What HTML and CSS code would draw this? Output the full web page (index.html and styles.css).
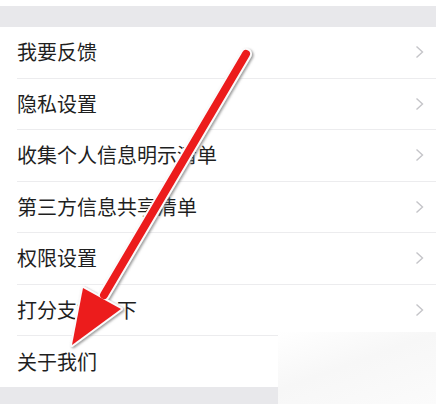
FILE: index.html
```html
<!DOCTYPE html>
<html lang="zh">
<head>
<meta charset="utf-8">
<link rel="stylesheet" href="styles.css">
</head>
<body>
<div class="page">
  <div class="top-strip"></div>
  <div class="gap-band"></div>
  <ul class="menu">
    <li class="row"><span class="label">我要反馈</span><svg class="chev" viewBox="0 0 9 14"><path d="M1.5 1.5 7.5 7 1.5 12.5"/></svg></li>
    <li class="row"><span class="label">隐私设置</span><svg class="chev" viewBox="0 0 9 14"><path d="M1.5 1.5 7.5 7 1.5 12.5"/></svg></li>
    <li class="row"><span class="label">收集个人信息明示清单</span><svg class="chev" viewBox="0 0 9 14"><path d="M1.5 1.5 7.5 7 1.5 12.5"/></svg></li>
    <li class="row"><span class="label">第三方信息共享清单</span><svg class="chev" viewBox="0 0 9 14"><path d="M1.5 1.5 7.5 7 1.5 12.5"/></svg></li>
    <li class="row"><span class="label">权限设置</span><svg class="chev" viewBox="0 0 9 14"><path d="M1.5 1.5 7.5 7 1.5 12.5"/></svg></li>
    <li class="row"><span class="label">打分支持一下</span><svg class="chev" viewBox="0 0 9 14"><path d="M1.5 1.5 7.5 7 1.5 12.5"/></svg></li>
    <li class="row last"><span class="label">关于我们</span><svg class="chev" viewBox="0 0 9 14"><path d="M1.5 1.5 7.5 7 1.5 12.5"/></svg></li>
  </ul>
  <div class="bottom-band"></div>
  <div class="watermark"></div>
  <svg class="arrow" viewBox="0 0 436 404" width="436" height="404">
    <defs>
      <filter id="sh" x="-20%" y="-20%" width="140%" height="140%">
        <feDropShadow dx="1.5" dy="1.2" stdDeviation="0.9" flood-color="#6f6f6f" flood-opacity="0.7"/>
      </filter>
    </defs>
    <g filter="url(#sh)">
      <line x1="246" y1="54" x2="104" y2="295" stroke="#fbfbfb" stroke-width="12" stroke-linecap="round"/>
      <polygon points="83,288 121,309 72,345" fill="#fbfbfb" stroke="#fbfbfb" stroke-width="4" stroke-linejoin="round"/>
      <line x1="246" y1="54" x2="104" y2="295" stroke="#ec1a1e" stroke-width="8" stroke-linecap="round"/>
      <polygon points="83,288 121,309 72,345" fill="#ec1a1e"/>
    </g>
  </svg>
</div>
</body>
</html>
```
FILE: styles.css
```css
* { box-sizing: border-box; }
html, body { margin: 0; padding: 0; background: #fff; }
.page {
  position: relative;
  width: 436px;
  height: 404px;
  overflow: hidden;
  background: #fff;
  font-family: "Noto Sans CJK SC", "Noto Sans", sans-serif;
}
.top-strip { height: 6px; background: #fff; }
.gap-band { height: 21px; background: #e8e8eb; }
.menu { list-style: none; margin: 0; padding: 0 0 0 17px; background: #fff; }
.row {
  display: flex;
  align-items: center;
  justify-content: space-between;
  height: 51.5px;
  padding-right: 12px;
  border-bottom: 1px solid #ececee;
}
.row.last { border-bottom: none; height: 51px; }
.label {
  font-size: 20px;
  color: #1f1f1f;
  line-height: 1;
  letter-spacing: 0;
}
.chev { width: 9px; height: 14px; fill: none; stroke: #c5c5c9; stroke-width: 1.4; }
.bottom-band { height: 30px; background: #e8e8eb; }
.watermark {
  position: absolute;
  left: 278px;
  top: 332px;
  width: 158px;
  height: 72px;
  background: linear-gradient(160deg, #ffffff 0%, #f7f7f7 45%, #fbfbfb 100%);
}
.arrow { position: absolute; left: 0; top: 0; }
```
